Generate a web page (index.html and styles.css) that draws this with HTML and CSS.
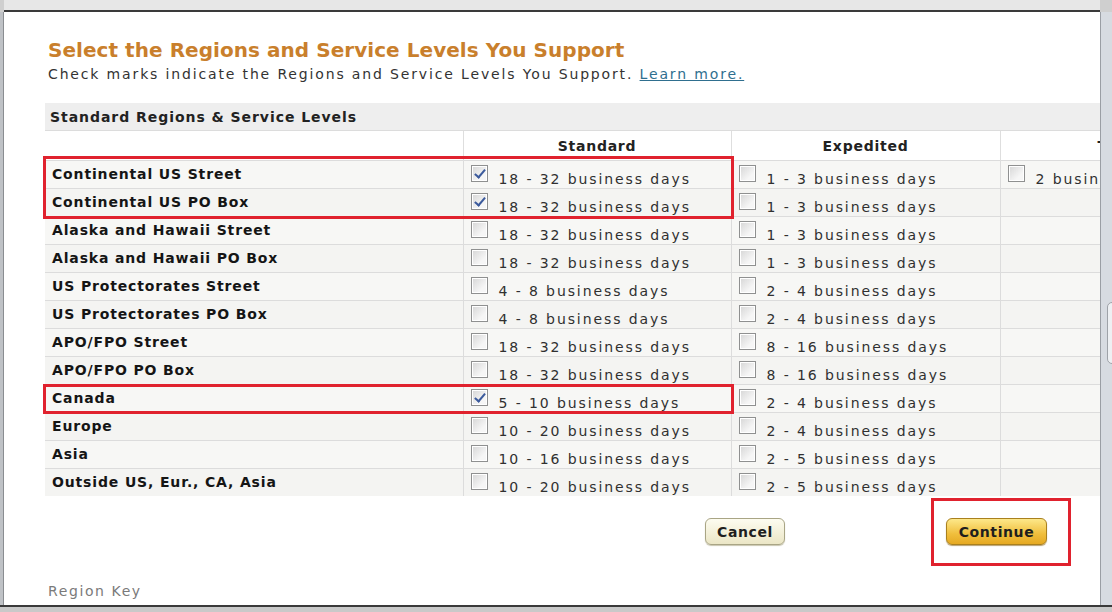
FILE: index.html
```html
<!DOCTYPE html>
<html>
<head>
<meta charset="utf-8">
<link rel="stylesheet" href="styles.css">
</head>
<body>
<div class="frame">
  <div class="topbar"></div>
  <div class="middle">
    <div class="left-strip"></div>
    <div class="dialog">
      <h1 class="title">Select the Regions and Service Levels You Support</h1>
      <p class="subtitle">Check marks indicate the Regions and Service Levels You Support. <a class="link" href="#">Learn more.</a></p>
      <div class="grid-wrap">
        <table class="grid">
          <colgroup>
            <col class="c-region"><col class="c-std"><col class="c-exp"><col class="c-two">
          </colgroup>
          <thead>
            <tr class="caption-row"><th colspan="4">Standard Regions &amp; Service Levels</th></tr>
            <tr class="head-row"><th></th><th>Standard</th><th>Expedited</th><th class="cut">Two-Day</th></tr>
          </thead>
          <tbody>
            <tr><td class="region">Continental US Street</td><td><span class="cb on"></span><span class="days">18 - 32 business days</span></td><td><span class="cb"></span><span class="days">1 - 3 business days</span></td><td><span class="cb"></span><span class="days">2 business days</span></td></tr>
            <tr><td class="region">Continental US PO Box</td><td><span class="cb on"></span><span class="days">18 - 32 business days</span></td><td><span class="cb"></span><span class="days">1 - 3 business days</span></td><td></td></tr>
            <tr><td class="region">Alaska and Hawaii Street</td><td><span class="cb"></span><span class="days">18 - 32 business days</span></td><td><span class="cb"></span><span class="days">1 - 3 business days</span></td><td></td></tr>
            <tr><td class="region">Alaska and Hawaii PO Box</td><td><span class="cb"></span><span class="days">18 - 32 business days</span></td><td><span class="cb"></span><span class="days">1 - 3 business days</span></td><td></td></tr>
            <tr><td class="region">US Protectorates Street</td><td><span class="cb"></span><span class="days">4 - 8 business days</span></td><td><span class="cb"></span><span class="days">2 - 4 business days</span></td><td></td></tr>
            <tr><td class="region">US Protectorates PO Box</td><td><span class="cb"></span><span class="days">4 - 8 business days</span></td><td><span class="cb"></span><span class="days">2 - 4 business days</span></td><td></td></tr>
            <tr><td class="region">APO/FPO Street</td><td><span class="cb"></span><span class="days">18 - 32 business days</span></td><td><span class="cb"></span><span class="days">8 - 16 business days</span></td><td></td></tr>
            <tr><td class="region">APO/FPO PO Box</td><td><span class="cb"></span><span class="days">18 - 32 business days</span></td><td><span class="cb"></span><span class="days">8 - 16 business days</span></td><td></td></tr>
            <tr><td class="region">Canada</td><td><span class="cb on"></span><span class="days">5 - 10 business days</span></td><td><span class="cb"></span><span class="days">2 - 4 business days</span></td><td></td></tr>
            <tr><td class="region">Europe</td><td><span class="cb"></span><span class="days">10 - 20 business days</span></td><td><span class="cb"></span><span class="days">2 - 4 business days</span></td><td></td></tr>
            <tr><td class="region">Asia</td><td><span class="cb"></span><span class="days">10 - 16 business days</span></td><td><span class="cb"></span><span class="days">2 - 5 business days</span></td><td></td></tr>
            <tr><td class="region">Outside US, Eur., CA, Asia</td><td><span class="cb"></span><span class="days">10 - 20 business days</span></td><td><span class="cb"></span><span class="days">2 - 5 business days</span></td><td></td></tr>
          </tbody>
        </table>
      </div>
      <div class="actions">
        <button class="btn btn-cancel">Cancel</button>
        <button class="btn btn-continue">Continue</button>
      </div>
      <div class="region-key">Region Key</div>

      <div class="mark mark-1"></div>
      <div class="mark mark-2"></div>
      <div class="mark mark-3"></div>
    </div>
    <div class="right-strip"><div class="handle"></div></div>
  </div>
  <div class="bottombar"></div>
</div>
</body>
</html>
```

FILE: styles.css
```css
html, body {
  margin: 0;
  padding: 0;
  width: 1112px;
  height: 612px;
  overflow: hidden;
  background: #cfcfcf;
  font-family: "DejaVu Sans", Verdana, sans-serif;
}

.frame {
  display: flex;
  flex-direction: column;
  width: 1112px;
  height: 612px;
}

.topbar {
  height: 10px;
  background: #e7e7e7;
  border-bottom: 2px solid #3a3a3a;
  margin-left: 4px;
  margin-right: 12px;
  flex: none;
}

.middle {
  display: flex;
  height: 593px;
  flex: none;
}

.left-strip {
  width: 3px;
  background: #bfc2c6;
  border-right: 1px solid #8a8d91;
  flex: none;
}

.right-strip {
  width: 11px;
  background: #d7dbe1;
  border-left: 1px solid #9a9ea4;
  flex: none;
  position: relative;
}

.handle {
  position: absolute;
  left: 6px;
  top: 290px;
  width: 10px;
  height: 60px;
  border: 1px solid #9ea2a8;
  border-radius: 5px;
  background: #eef0f3;
}

.dialog {
  flex: 1;
  background: #ffffff;
  position: relative;
  overflow: hidden;
  padding: 26px 0 0 41px;
}

.bottombar {
  height: 5px;
  background: #c9c9c9;
  border-top: 2px solid #3a3a3a;
  flex: none;
}

.title {
  margin: 0 0 0 3px;
  font-size: 20px;
  line-height: 25px;
  font-weight: bold;
  color: #c97f2c;
  letter-spacing: 0.05px;
}

.subtitle {
  margin: 2px 0 0 3px;
  font-size: 14px;
  line-height: 18px;
  color: #333;
  letter-spacing: 1.85px;
}

.link {
  color: #2f6f8f;
  text-decoration: underline;
}

.grid-wrap {
  margin-top: 20px;
  width: 1055px;
  overflow: hidden;
}

.grid {
  border-collapse: collapse;
  table-layout: fixed;
  width: 1225px;
  font-size: 14px;
}

.c-region { width: 418px; }
.c-std { width: 268px; }
.c-exp { width: 269px; }
.c-two { width: 270px; }

.caption-row th {
  height: 27px;
  background: #eeeeee;
  text-align: left;
  padding: 0 0 0 5px;
  font-weight: bold;
  color: #222;
  letter-spacing: 0.95px;
  border-bottom: 1px solid #dcdcdc;
}

.head-row th {
  height: 29px;
  background: #ffffff;
  font-weight: bold;
  color: #222;
  text-align: center;
  letter-spacing: 0.75px;
  border-left: 1px solid #dedede;
  padding: 0;
  vertical-align: middle;
}

.head-row th:first-child {
  border-left: none;
}

.head-row th.cut {
  text-align: left;
  padding-left: 97px;
}

.grid tbody tr td {
  height: 27px;
  padding: 0;
  background: #f4f4f2;
  border-top: 1px solid #dcdcdc;
  border-left: 1px solid #dcdcdc;
  white-space: nowrap;
  vertical-align: top;
  overflow: hidden;
}

.grid tbody tr:nth-child(odd) td {
  background: #f7f7f5;
}

.grid tbody tr td.region {
  border-left: none;
  padding-left: 7px;
  font-weight: bold;
  color: #151515;
  letter-spacing: 0.85px;
  line-height: 27px;
}

.cb {
  display: inline-block;
  width: 15px;
  height: 15px;
  margin: 4px 0 0 7px;
  border: 1px solid #8f9090;
  background: linear-gradient(135deg, #d6d6d6, #f6f6f6 70%);
  box-shadow: inset 0 0 0 1px #ffffff;
  vertical-align: top;
  position: relative;
}

.cb.on::after {
  content: "";
  position: absolute;
  left: 5px;
  top: 1px;
  width: 4px;
  height: 9px;
  border-right: 2px solid #3b5a9c;
  border-bottom: 2px solid #3b5a9c;
  transform: rotate(40deg);
}

.days {
  display: inline-block;
  margin-left: 11px;
  line-height: 18px;
  padding-top: 9px;
  color: #303030;
  letter-spacing: 1.9px;
  vertical-align: top;
}

.actions {
  display: flex;
  margin: 22px 0 0 660px;
  gap: 161px;
}

.btn {
  font-family: "DejaVu Sans", Verdana, sans-serif;
  font-size: 14px;
  font-weight: bold;
  letter-spacing: 0.6px;
  color: #1e1e1e;
  height: 27px;
  padding: 0;
  border-radius: 6px;
  cursor: pointer;
}

.btn-cancel {
  width: 80px;
  border: 1px solid #a9a585;
  background: linear-gradient(#fdfcf0, #ebe6c6);
  box-shadow: 0 1px 1px #c9c6b0;
}

.btn-continue {
  width: 101px;
  border: 1px solid #a9801e;
  background: linear-gradient(#fde88a, #f0be3c 60%, #e6a922);
  box-shadow: 0 1px 1px #b8a070;
}

.region-key {
  margin: 37px 0 0 3px;
  font-size: 14px;
  line-height: 18px;
  color: #7a7a7a;
  letter-spacing: 1.6px;
}

.mark {
  position: absolute;
  border: 3px solid #e0222e;
}

.mark-1 {
  left: 39px;
  top: 144px;
  width: 685px;
  height: 57px;
}

.mark-2 {
  left: 39px;
  top: 372px;
  width: 685px;
  height: 24px;
}

.mark-3 {
  left: 927px;
  top: 486px;
  width: 134px;
  height: 62px;
}
```
